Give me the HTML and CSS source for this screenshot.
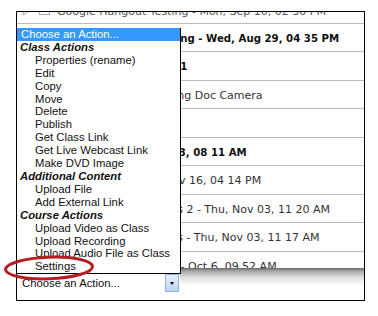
FILE: index.html
```html
<!DOCTYPE html>
<html lang="en">
<head>
    <meta charset="UTF-8">
    <title>Choose an Action</title>
    <link rel="stylesheet" href="styles.css">
</head>
<body>
    <div class="frame">
        <div class="scroller">
            <div class="rows">
                <div class="row first">
                    <span class="ico"><svg width="8" height="10" viewBox="0 0 8 10"><path d="M1 1 L7 5 L1 9 Z" fill="none" stroke="#a8a8a8" stroke-width="1"/></svg></span>
                    <span class="ico wide"><svg width="11" height="8" viewBox="0 0 11 8"><rect x="0.5" y="0.5" width="10" height="7" fill="none" stroke="#a8a8a8"/></svg></span>
                    <span class="title">Google Hangout Testing - Mon, Sep 10, 02 30 PM</span>
                </div>
                <div class="row"><span class="ico"></span><span class="ico wide"></span><span class="title bold">Google Hangout Testing - Wed, Aug 29, 04 35 PM</span></div>
                <div class="row"><span class="ico"></span><span class="ico wide"></span><span class="title bold">Google Hangout Test 1</span></div>
                <div class="row"><span class="ico"></span><span class="ico wide"></span><span class="title">Hangout Test - Samsung Doc Camera</span></div>
                <div class="row"><span class="ico"></span><span class="ico wide"></span><span class="title">Lecture Capture Test</span></div>
                <div class="row"><span class="ico"></span><span class="ico wide"></span><span class="title bold">Webinar - Wed, Oct 03, 08 11 AM</span></div>
                <div class="row"><span class="ico"></span><span class="ico wide"></span><span class="title">Class Demo - Wed, Nov 16, 04 14 PM</span></div>
                <div class="row"><span class="ico"></span><span class="ico wide"></span><span class="title">Google Hangouts Tests 2 - Thu, Nov 03, 11 20 AM</span></div>
                <div class="row"><span class="ico"></span><span class="ico wide"></span><span class="title">Google Hangouts Tests - Thu, Nov 03, 11 17 AM</span></div>
                <div class="row"><span class="ico"></span><span class="ico wide"></span><span class="title">Google Hangout Tests - Oct 6, 09 52 AM</span></div>
            </div>
        </div>

        <div class="footer">
            <div class="picker">
                <span>Choose an Action...</span>
                <span class="arrow"></span>
            </div>
        </div>

        <!-- the open dropdown list -->
        <div class="menu">
            <div class="opt selected">Choose an Action...</div>
            <div class="group">Class Actions</div>
            <div class="opt">Properties (rename)</div>
            <div class="opt">Edit</div>
            <div class="opt">Copy</div>
            <div class="opt">Move</div>
            <div class="opt">Delete</div>
            <div class="opt">Publish</div>
            <div class="opt">Get Class Link</div>
            <div class="opt">Get Live Webcast Link</div>
            <div class="opt">Make DVD Image</div>
            <div class="group">Additional Content</div>
            <div class="opt">Upload File</div>
            <div class="opt">Add External Link</div>
            <div class="group">Course Actions</div>
            <div class="opt">Upload Video as Class</div>
            <div class="opt">Upload Recording</div>
            <div class="opt">Upload Audio File as Class</div>
            <div class="opt">Settings</div>
        </div>
    </div>

    <svg class="mark" width="100" height="40" viewBox="0 0 100 40">
        <ellipse cx="49" cy="19" rx="43.5" ry="10.8" transform="rotate(-2 49 19)" fill="none" stroke="#b31f25" stroke-width="3"/>
    </svg>
</body>
</html>
```

FILE: styles.css
```css
body {
    margin: 0;
    background: white;
    font-family: "DejaVu Sans", Verdana, sans-serif;
}
.frame {
    position: relative;
    margin: 11px 0 0 16px;
    width: 347px;
    height: 288px;
    border: 1px solid #000;
    display: flex;
    flex-direction: column;
    background: white;
}
.scroller {
    height: 256px;
    overflow: hidden;
}
.rows {
    margin-top: -16.8px;
}
.row {
    height: 28.5px;
    border-bottom: 1px solid #bcbcbc;
    display: flex;
    align-items: center;
    padding: 2px 0 0 5px;
    box-sizing: border-box;
    font-size: 11px;
    color: #333;
    white-space: nowrap;
}
.row.first {
    color: #555;
    padding-top: 5px;
}
.ico {
    width: 17px;
    display: flex;
}
.ico.wide {
    width: 18px;
}
.bold {
    font-size: 10.2px;
    font-weight: bold;
    color: #111;
}
.footer {
    flex: 1;
    background: linear-gradient(#686868, #a5a5a5 3px, #dcdcdc 9px, #fff 17px);
}
.picker {
    margin-top: 6px;
    width: 163px;
    height: 18px;
    background: white;
    display: flex;
    align-items: center;
    justify-content: space-between;
    padding-left: 5px;
    box-sizing: border-box;
    font-family: "Liberation Sans", Arial, sans-serif;
    font-size: 11.3px;
    color: #111;
}
.arrow {
    width: 12px;
    height: 16px;
    margin-right: 1px;
    border: 1px solid #8fb2d8;
    background: linear-gradient(#e6f0fb, #bcd6f0);
    display: flex;
    align-items: center;
    justify-content: center;
}
.arrow::after {
    content: "";
    border-left: 2.5px solid transparent;
    border-right: 2.5px solid transparent;
    border-top: 3px solid #000;
}
.menu {
    position: absolute;
    left: -1px;
    top: 16px;
    width: 163px;
    border: 1px solid #000;
    border-top: none;
    background: white;
    font-family: "Liberation Sans", Arial, sans-serif;
    font-size: 11.3px;
    line-height: 12.9px;
    color: #111;
}
.opt {
    padding-left: 18px;
    white-space: nowrap;
}
.opt.selected {
    padding-left: 4px;
    background: #3399ff;
    color: white;
}
.group {
    padding-left: 3px;
    font-weight: bold;
    font-style: italic;
}
.mark {
    position: absolute;
    left: 0;
    top: 249px;
}
```
